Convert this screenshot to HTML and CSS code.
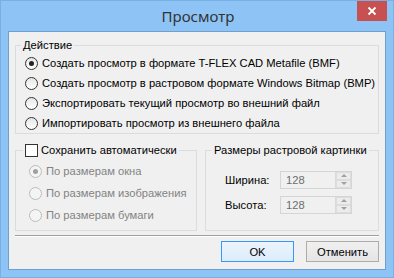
FILE: index.html
```html
<!DOCTYPE html>
<html>
<head>
<meta charset="utf-8">
<link rel="stylesheet" href="styles.css">
</head>
<body>
<div class="window">
  <div class="titlebar">
    <div class="title">Просмотр</div>
    <div class="close"><svg width="10" height="10" viewBox="0 0 10 10"><path d="M1.5 1.5 L8.5 8.5 M8.5 1.5 L1.5 8.5" stroke="#fff" stroke-width="1.8" fill="none"/></svg></div>
  </div>
  <div class="client">
    <fieldset class="group action">
      <legend><span class="lg">Действие</span></legend>
      <div class="gbody">
        <div class="radio checked"><span class="rb"></span><span>Создать просмотр в формате T-FLEX CAD Metafile (BMF)</span></div>
        <div class="radio"><span class="rb"></span><span>Создать просмотр в растровом формате Windows Bitmap (BMP)</span></div>
        <div class="radio"><span class="rb"></span><span>Экспортировать текущий просмотр во внешний файл</span></div>
        <div class="radio"><span class="rb"></span><span>Импортировать просмотр из внешнего файла</span></div>
      </div>
    </fieldset>
    <div class="row">
      <fieldset class="group auto">
        <legend><span class="lg"><span class="cb"></span>Сохранить автоматически</span></legend>
        <div class="gbody">
          <div class="radio disabled checked"><span class="rb"></span><span>По размерам окна</span></div>
          <div class="radio disabled"><span class="rb"></span><span>По размерам изображения</span></div>
          <div class="radio disabled"><span class="rb"></span><span>По размерам бумаги</span></div>
        </div>
      </fieldset>
      <fieldset class="group size">
        <legend><span class="lg">Размеры растровой картинки</span></legend>
        <div class="gbody">
          <div class="field">
            <span class="lbl">Ширина:</span>
            <div class="spin"><span class="val">128</span><div class="arrows"><span class="up"></span><span class="down"></span></div></div>
          </div>
          <div class="field">
            <span class="lbl">Высота:</span>
            <div class="spin"><span class="val">128</span><div class="arrows"><span class="up"></span><span class="down"></span></div></div>
          </div>
        </div>
      </fieldset>
    </div>
    <div class="sep"></div>
    <div class="buttons">
      <button class="btn default">OK</button>
      <button class="btn">Отменить</button>
    </div>
  </div>
</div>
</body>
</html>
```
FILE: styles.css
```css
* { box-sizing: border-box; }
html, body { margin: 0; padding: 0; }
body {
  width: 394px; height: 278px; overflow: hidden;
  font-family: "Liberation Sans", Arial, sans-serif;
  font-size: 11.2px; color: #000;
  background: #8dc4f5;
}
.window {
  width: 394px; height: 278px;
  background: #8dc4f5;
  border: 1px solid #78b0e4;
  display: flex; flex-direction: column;
}
.titlebar {
  height: 30px;
  position: relative;
}
.title {
  text-align: center;
  font-family: "Noto Sans", "Open Sans", sans-serif;
  font-size: 15px;
  line-height: 30px;
  color: #333;
  padding-left: 2px;
}
.close {
  position: absolute;
  right: 6px; top: 0;
  width: 30px; height: 20px;
  background: #c75050;
  display: flex; align-items: center; justify-content: center;
}
.client {
  margin: 0 7px 7px 7px;
  flex: 1;
  background: #f0f0f0;
  border: 1px solid #6f9fcc;
  padding: 5px 6px 6px 6px;
  display: flex; flex-direction: column;
}
.group {
  margin: 0;
  padding: 0;
  border: 1px solid #dcdcdc;
  min-width: 0;
}
.group legend {
  padding: 0 2px;
  margin-left: 5px;
  line-height: 16px;
  height: 16px;
}
.lg { display: flex; align-items: center; white-space: nowrap; }
.action .gbody { padding-left: 9px; }
.radio {
  height: 20px;
  display: flex; align-items: center;
  white-space: nowrap;
}
.rb {
  width: 13px; height: 13px;
  border-radius: 50%;
  border: 1px solid #333;
  background: linear-gradient(#e6e6e6, #fff);
  margin-right: 4px;
  display: flex; align-items: center; justify-content: center;
  flex: none;
}
.radio.checked .rb::after {
  content: ""; width: 5px; height: 5px; border-radius: 50%;
  background: #222;
}
.radio.disabled { color: #838383; height: 22px; }
.radio.disabled .rb { border-color: #bcbcbc; background: #f4f4f4; }
.radio.disabled.checked .rb::after { background: #a0a0a0; }
.row {
  display: flex;
  gap: 8px;
  margin-top: 8px;
}
.auto { width: 182px; }
.auto .gbody { padding: 2px 0 4px 13px; }
.auto legend { margin-left: 7px; }
.cb {
  width: 13px; height: 13px;
  border: 1px solid #333;
  background: #fff;
  margin-right: 3px;
  flex: none;
}
.size { flex: 1; }
.size .gbody { padding: 12px 0 0 19px; }
.size legend { margin-left: 6px; }
.field { display: flex; align-items: center; height: 19px; margin-bottom: 6px; }
.lbl { width: 55px; }
.spin {
  width: 72px; height: 18px;
  border: 1px solid #d5d5d5;
  background: #f0f0f0;
  display: flex; align-items: center;
  color: #6d6d6d;
}
.val { flex: 1; padding-left: 5px; }
.arrows {
  width: 16px; height: 16px;
  display: flex; flex-direction: column;
  border-left: 1px solid #dadada;
}
.arrows span {
  flex: 1; display: flex; align-items: center; justify-content: center;
  background: #ececec;
  border: 1px solid #dcdcdc;
}
.arrows .up::after {
  content: ""; border-left: 3px solid transparent; border-right: 3px solid transparent;
  border-bottom: 3px solid #a0a0a0;
}
.arrows .down::after {
  content: ""; border-left: 3px solid transparent; border-right: 3px solid transparent;
  border-top: 3px solid #a0a0a0;
}
.sep {
  margin-top: 4px;
  border-top: 1px solid #a0a0a0;
  border-bottom: 1px solid #fff;
}
.buttons {
  margin-top: 4px;
  display: flex; justify-content: flex-end; gap: 12px;
}
.btn {
  width: 73px; height: 21px;
  font-family: inherit; font-size: 11.2px; color: #000;
  border: 1px solid #acacac;
  background: linear-gradient(#f0f0f0, #e5e5e5);
  padding: 0;
}
.btn.default { border-color: #3399ff; background: linear-gradient(#ecf4fc, #dcecfc); }
```
